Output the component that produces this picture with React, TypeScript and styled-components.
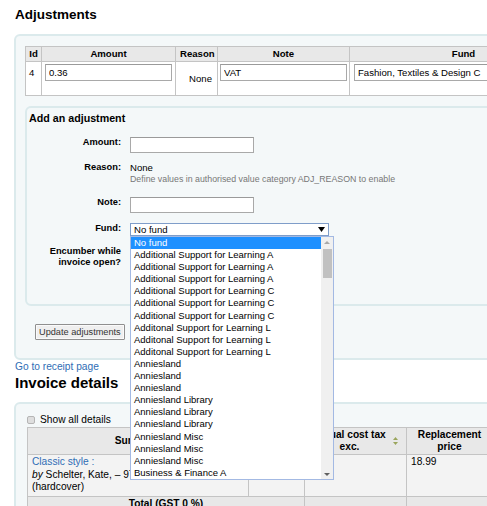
import React from 'react'
import styled, { createGlobalStyle } from 'styled-components'

const GlobalStyle = createGlobalStyle`
  html, body {
    margin: 0;
    padding: 0;
    background: #fff;
    overflow: hidden;
  }
  body {
    font-family: 'Liberation Sans', Arial, sans-serif;
    font-size: 9.6px;
    color: #000;
  }
`

const Page = styled.div`
  width: 720px;
  padding-left: 14px;
`

const PageTitle = styled.h2<{ $size: number; $top: number; $bottom: number }>`
  margin: ${({ $top }) => $top}px 0 ${({ $bottom }) => $bottom}px 1px;
  font-size: ${({ $size }) => $size}px;
  line-height: 17px;
  font-weight: bold;
`

const Panel = styled.div<{ $pad: string }>`
  box-sizing: border-box;
  width: 660px;
  background: #f4f8f9;
  border: 2px solid #dbeaec;
  border-radius: 6px;
  padding: ${({ $pad }) => $pad};
`

const InnerPanel = styled(Panel)`
  width: 640px;
  margin-top: 10px;
`

const Grid = styled.table`
  border-collapse: collapse;
  table-layout: fixed;
  border: 1px solid #c4c4c4;
`

const Th = styled.th<{ $size?: number }>`
  background: #e8e8e8;
  border: 1px solid #c4c4c4;
  font-weight: bold;
  font-size: ${({ $size }) => $size ?? 9.6}px;
  line-height: 12px;
  padding: 1px 4px;
  text-align: center;
  vertical-align: middle;
  position: relative;
`

const Td = styled.td<{ $valign?: string; $align?: string; $pad?: string; $bg?: string }>`
  border: 1px solid #c4c4c4;
  background: ${({ $bg }) => $bg ?? '#fff'};
  vertical-align: ${({ $valign }) => $valign ?? 'top'};
  text-align: ${({ $align }) => $align ?? 'left'};
  padding: ${({ $pad }) => $pad ?? '2px 3px'};
  line-height: 11px;
`

const TextInput = styled.input<{ $w: number }>`
  box-sizing: border-box;
  width: ${({ $w }) => $w}px;
  height: 17px;
  border: 1px solid #a9a9a9;
  border-top-color: #9a9a9a;
  background: #fff;
  padding: 0 3px;
  font-family: inherit;
  font-size: 9.6px;
  color: #000;
  display: block;
`

const FormHeading = styled.div`
  font-weight: bold;
  font-size: 10.7px;
  line-height: 10px;
  margin-left: 2px;
  margin-bottom: 14px;
`

const FormRow = styled.div<{ $gap: number }>`
  display: flex;
  align-items: flex-start;
  margin-bottom: ${({ $gap }) => $gap}px;
`

const FieldLabel = styled.label`
  width: 92px;
  flex: none;
  margin-left: 2px;
  margin-right: 9px;
  text-align: right;
  font-weight: bold;
  font-size: 9.3px;
  line-height: 11px;
`

const Plain = styled.div`
  font-size: 9.6px;
  line-height: 11px;
`

const Hint = styled.div`
  font-size: 8.8px;
  line-height: 12px;
  color: #777;
`

const SelectWrap = styled.div`
  position: relative;
  box-sizing: border-box;
  width: 199px;
  height: 13px;
  border: 1px solid #7f9dc9;
  background: #fff;
  display: flex;
  align-items: center;
  justify-content: space-between;
  padding: 0 3px 0 3px;
  font-size: 9.6px;
`

const DropList = styled.div`
  position: absolute;
  top: 12px;
  left: -1px;
  width: 204px;
  height: 244px;
  box-sizing: border-box;
  border: 1px solid #a3b9e3;
  background: #fff;
  display: flex;
  z-index: 10;
`

const Options = styled.div`
  flex: 1;
`

const Option = styled.div<{ $active?: boolean }>`
  height: 12.1px;
  line-height: 12.1px;
  padding-left: 3px;
  font-size: 9.5px;
  white-space: nowrap;
  color: ${({ $active }) => ($active ? '#fff' : '#000')};
  background: ${({ $active }) => ($active ? '#1e90ff' : 'transparent')};
`

const Scrollbar = styled.div`
  width: 12px;
  background: #f0f0f0;
  display: flex;
  flex-direction: column;
  align-items: center;
  padding: 4px 0 3px;
  box-sizing: border-box;
`

const Thumb = styled.div`
  width: 9px;
  height: 29px;
  background: #c1c1c1;
  margin-top: 5px;
  flex: none;
`

const Spacer = styled.div`
  flex: 1;
`

const UpdateButton = styled.button`
  display: block;
  margin: 18px 0 0 10px;
  height: 16px;
  padding: 0 3px;
  background: #efefef;
  border: 1px solid #8f8f8f;
  box-shadow: inset 0 0 0 1px #fafafa;
  border-radius: 1px;
  font-family: inherit;
  font-size: 9.2px;
  color: #333;
  line-height: 12px;
`

const ReceiptLink = styled.a`
  display: block;
  margin: 1px 0 0 1px;
  font-size: 10.2px;
  line-height: 12px;
  color: #2f6db5;
  text-decoration: none;
`

const CheckRow = styled.label`
  display: flex;
  align-items: center;
  gap: 5px;
  font-size: 10.2px;
  line-height: 12px;
  margin-bottom: 1px;
`

const CheckBox = styled.span`
  width: 8px;
  height: 8px;
  box-sizing: border-box;
  border: 1px solid #b5b5b5;
  border-radius: 2px;
  background: #dedede;
`

const TitleLink = styled.a`
  color: #2f6db5;
  text-decoration: none;
`

const SortIcon = styled.svg`
  position: absolute;
  right: 8px;
  top: 50%;
  margin-top: -4px;
`

const Triangle = ({ up, color, w = 7, h = 5 }: { up?: boolean; color: string; w?: number; h?: number }) => (
  <svg width={w} height={h} viewBox={`0 0 ${w} ${h}`}>
    <polygon points={up ? `0,${h} ${w / 2},0 ${w},${h}` : `0,0 ${w},0 ${w / 2},${h}`} fill={color} />
  </svg>
)

const funds = [
  'Additional Support for Learning A',
  'Additional Support for Learning A',
  'Additional Support for Learning A',
  'Additional Support for Learning C',
  'Additional Support for Learning C',
  'Additional Support for Learning C',
  'Additonal Support for Learning L',
  'Additonal Support for Learning L',
  'Additonal Support for Learning L',
  'Anniesland',
  'Anniesland',
  'Anniesland',
  'Anniesland Library',
  'Anniesland Library',
  'Anniesland Library',
  'Anniesland Misc',
  'Anniesland Misc',
  'Anniesland Misc',
  'Business & Finance A',
]

const App = () => (
  <>
    <GlobalStyle />
    <Page>
      <PageTitle $size={13.5} $top={6} $bottom={11}>
        Adjustments
      </PageTitle>

      <Panel $pad="10px 0 18px 9px">
        <Grid style={{ width: 552 }}>
          <colgroup>
            <col style={{ width: 16 }} />
            <col style={{ width: 134 }} />
            <col style={{ width: 42 }} />
            <col style={{ width: 132 }} />
            <col style={{ width: 228 }} />
          </colgroup>
          <thead>
            <tr>
              <Th style={{ padding: '1px 2px' }}>Id</Th>
              <Th>Amount</Th>
              <Th>Reason</Th>
              <Th>Note</Th>
              <Th>Fund</Th>
            </tr>
          </thead>
          <tbody>
            <tr>
              <Td $pad="5px 2px 14px 3px">4</Td>
              <Td $pad="2px 3px 14px 3px">
                <TextInput $w={127} defaultValue="0.36" />
              </Td>
              <Td $valign="middle" $align="right" $pad="2px 5px">
                None
              </Td>
              <Td $pad="2px 2px 14px 2px">
                <TextInput $w={127} defaultValue="VAT" />
              </Td>
              <Td $pad="2px 3px 14px 4px">
                <TextInput $w={210} defaultValue="Fashion, Textiles & Design C" />
              </Td>
            </tr>
          </tbody>
        </Grid>

        <InnerPanel $pad="5px 0 36px 0">
          <FormHeading>Add an adjustment</FormHeading>
          <FormRow $gap={9}>
            <FieldLabel>Amount:</FieldLabel>
            <TextInput $w={124} style={{ height: 16 }} />
          </FormRow>
          <FormRow $gap={12}>
            <FieldLabel>Reason:</FieldLabel>
            <div>
              <Plain>None</Plain>
              <Hint>Define values in authorised value category ADJ_REASON to enable</Hint>
            </div>
          </FormRow>
          <FormRow $gap={10}>
            <FieldLabel>Note:</FieldLabel>
            <TextInput $w={124} style={{ height: 16 }} />
          </FormRow>
          <FormRow $gap={10}>
            <FieldLabel>Fund:</FieldLabel>
            <SelectWrap>
              <span>No fund</span>
              <Triangle color="#000" w={7} h={5} />
              <DropList>
                <Options>
                  <Option $active>No fund</Option>
                  {funds.map((f, i) => (
                    <Option key={i}>{f}</Option>
                  ))}
                </Options>
                <Scrollbar>
                  <Triangle up color="#a8a8a8" w={6} h={3} />
                  <Thumb />
                  <Spacer />
                  <Triangle color="#606060" w={6} h={3} />
                </Scrollbar>
              </DropList>
            </SelectWrap>
          </FormRow>
          <FormRow $gap={0}>
            <FieldLabel>Encumber while invoice open?</FieldLabel>
          </FormRow>
        </InnerPanel>

        <UpdateButton type="button">Update adjustments</UpdateButton>
      </Panel>

      <ReceiptLink href="#">Go to receipt page</ReceiptLink>

      <PageTitle $size={15} $top={1} $bottom={11}>
        Invoice details
      </PageTitle>

      <Panel $pad="10px 0 0 11px">
        <CheckRow>
          <CheckBox />
          Show all details
        </CheckRow>
        <Grid style={{ width: 555 }}>
          <colgroup>
            <col style={{ width: 221 }} />
            <col style={{ width: 56 }} />
            <col style={{ width: 102 }} />
            <col style={{ width: 86 }} />
            <col style={{ width: 90 }} />
          </colgroup>
          <thead>
            <tr>
              <Th $size={10.2}>Summary</Th>
              <Th $size={10.2}>Quantity</Th>
              <Th $size={10.2} style={{ paddingRight: 16 }}>
                Actual cost tax exc.
                <SortIcon width="5" height="8" viewBox="0 0 5 8">
                  <polygon points="0,3 2.5,0 5,3" fill="#9aa55c" />
                  <polygon points="0,5 5,5 2.5,8" fill="#9aa55c" />
                </SortIcon>
              </Th>
              <Th $size={10.2}>Replacement price</Th>
              <Th $size={10.2}>Budget</Th>
            </tr>
          </thead>
          <tbody>
            <tr>
              <Td $bg="#f3f3f3" $pad="1px 4px 2px" style={{ fontSize: 10.2, lineHeight: '12.5px' }}>
                <TitleLink href="#">Classic style :</TitleLink>
                <br />
                <i>by</i> Schelter, Kate, – 9781849491334
                <br />
                (hardcover)
              </Td>
              <Td $bg="#f3f3f3" />
              <Td $bg="#f3f3f3" />
              <Td $bg="#f3f3f3" $pad="1px 4px 2px" style={{ fontSize: 10.2, lineHeight: '12.5px' }}>
                18.99
              </Td>
              <Td $bg="#f3f3f3" />
            </tr>
          </tbody>
          <tfoot>
            <tr>
              <Td
                colSpan={2}
                $bg="#e8e8e8"
                $align="center"
                $pad="1px 4px"
                style={{ fontWeight: 'bold', fontSize: 10.2, lineHeight: '12px' }}
              >
                Total (GST 0 %)
              </Td>
              <Td $bg="#e8e8e8" />
              <Td $bg="#e8e8e8" />
              <Td $bg="#e8e8e8" />
            </tr>
          </tfoot>
        </Grid>
      </Panel>
    </Page>
  </>
)

export default App
